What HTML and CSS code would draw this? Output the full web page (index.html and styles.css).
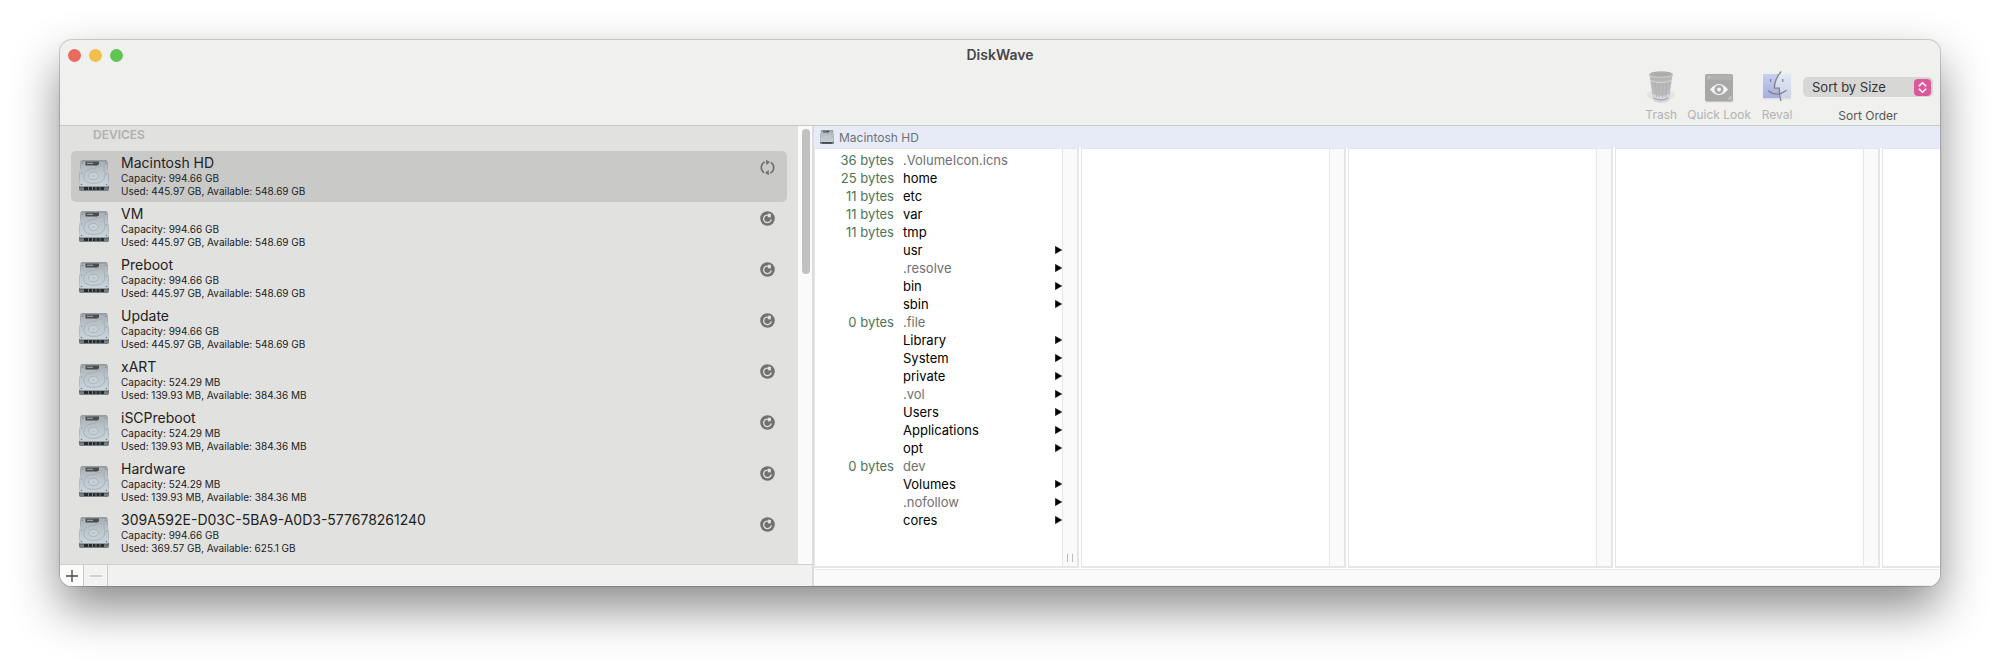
FILE: index.html
```
<!DOCTYPE html>
<html lang="en">
<head>
    <meta charset="UTF-8">
    <meta name="viewport" content="width=device-width, initial-scale=1.0">
    <title>DiskWave</title>
    <link rel="stylesheet" href="styles.css">
</head>
<body>
    <svg class="defs" aria-hidden="true">
        <defs>
            <linearGradient id="hd-top" x1="0" y1="0" x2="0" y2="1">
                <stop offset="0" stop-color="#aab0b4"/>
                <stop offset="0.5" stop-color="#bcc6cc"/>
                <stop offset="1" stop-color="#cbd5dc"/>
            </linearGradient>
            <linearGradient id="trash-fill" x1="0" y1="0" x2="0" y2="1">
                <stop offset="0" stop-color="#b4b4b4"/>
                <stop offset="0.7" stop-color="#bcbcbf"/>
                <stop offset="1" stop-color="#d4d4d8"/>
            </linearGradient>
            <linearGradient id="finder-left" x1="0" y1="0" x2="0" y2="1">
                <stop offset="0" stop-color="#c6cff0"/>
                <stop offset="1" stop-color="#a5aede"/>
            </linearGradient>
            <linearGradient id="finder-right" x1="0" y1="0" x2="0" y2="1">
                <stop offset="0" stop-color="#e3e8f5"/>
                <stop offset="1" stop-color="#ccd2e8"/>
            </linearGradient>
        </defs>
        <symbol id="drive" viewBox="0 0 30 31">
            <path d="M3 .5h24q1.200 0 1.400 1.200L30 25.500v3.500q0 1.800-1.800 1.800H1.800Q0 30.800 0 29v-3.500L1.600 1.700Q1.800.5 3 .5z" fill="#5c6266"/>
            <path d="M3 .5h24q1.200 0 1.400 1.200L30 25q0 1.600-1.600 1.600H1.600Q0 26.600 0 25L1.600 1.700Q1.800.5 3 .5z" fill="url(#hd-top)"/>
            <path d="M2 1.400Q2.400.5 3 .5h24q.8 0 1 .9z" fill="#8b9093"/>
            <path d="M6.500 1.500H20v3q-2 1.600-4 1H6.500z" fill="#4a4d4f"/>
            <path d="M8 3.300h6" stroke="#9a9fa2" stroke-width="1.200"/>
            <path d="M25 2.500v7q0 2 .8 4 1.200 8-8 9.700Q6 24.500 4.700 17.500 4.500 10.500 11.500 9q5.500-.3 7-2.500l3.500 0V2.500" fill="none" stroke="#a0abb2" stroke-width=".8"/>
            <ellipse cx="14.500" cy="16" rx="5" ry="3.600" fill="#c6d0d6" stroke="#a3aeb5" stroke-width=".8"/>
            <path d="M13 16h3" stroke="#a9b3b9" stroke-width=".7"/>
            <g fill="#747d83"><circle cx="3.500" cy="3.300" r=".7"/><circle cx="26.800" cy="3.300" r=".7"/><circle cx="2.600" cy="13" r=".6"/><circle cx="27.700" cy="14" r=".6"/><circle cx="2.500" cy="24.500" r=".8"/><circle cx="27.500" cy="24.500" r=".8"/></g>
            <path d="M0 27.800h30V29q0 1.800-1.800 1.800H1.800Q0 30.800 0 29z" fill="#777d81"/>
            <path d="M5 27h20v3H5z" fill="#282b2d"/>
            <path d="M9.500 27v3M13.500 27v3M17 27v3M21 27v3" stroke="#767c80" stroke-width="1"/>
        </symbol>
        <symbol id="rescan" viewBox="0 0 15 15">
            <circle cx="7.500" cy="7.500" r="7.300" fill="#717170"/>
            <path d="M8 4.100A3.800 3.800 0 1 0 11.200 8.300" fill="none" stroke="#e1e1df" stroke-width="1.300"/>
            <path d="M8.200 2.600 11 2.900 10.800 6.400 7.700 6.200z" fill="#e1e1df"/>
        </symbol>
        <symbol id="arrow" viewBox="0 0 7 8">
            <path d="M.4.4 6.700 4 .4 7.600z" fill="#000" stroke="#000" stroke-width=".6" stroke-linejoin="round"/>
        </symbol>
    </svg>

    <div class="window">
        <header class="header">
            <div class="titlebar">
                <div class="lights">
                    <button class="light close" aria-label="Close"></button>
                    <button class="light minimize" aria-label="Minimize"></button>
                    <button class="light maximize" aria-label="Zoom"></button>
                </div>
                <h1 class="title">DiskWave</h1>
            </div>
            <div class="toolbar">
                <button class="tool" disabled>
                    <svg class="tool-icon" viewBox="0 0 32 34">
                        <ellipse cx="16" cy="25" rx="14" ry="6" fill="#e4e4e3"/>
                        <path d="M4.500 4 8 29.500q.5 3.200 8 3.200t8-3.200L27.500 4z" fill="url(#trash-fill)"/>
                        <path d="M8 24q8 4 16 0l-.7 5.500q-.5 2.700-7.300 2.700t-7.300-2.700z" fill="#d7d7de"/>
                        <path d="M9 28q7 4 14 0" fill="none" stroke="#a4a4a8" stroke-width="1.300"/>
                        <path d="M10 12l1.500 15M13.500 12.500l.7 15M18 12.500l-.5 15M22 12l-1.500 15" stroke="#b0b0b1" stroke-width="1"/>
                        <path d="M5.500 10.500q10.500 4 21 0" fill="none" stroke="#d9d9d9" stroke-width="1"/>
                        <ellipse cx="16" cy="4.800" rx="11.600" ry="2.600" fill="#adadad" stroke="#c9c9c8" stroke-width="1.200"/>
                        <path d="M5 4.500Q6 2 16 2t11 2.500" fill="none" stroke="#989898" stroke-width=".8"/>
                    </svg>
                    <span>Trash</span>
                </button>
                <button class="tool" disabled>
                    <svg class="tool-icon" viewBox="0 0 32 34">
                        <rect x="2" y="30" width="28" height="2.500" rx="1" fill="#dededd"/>
                        <rect x="2" y="4" width="28" height="27.500" rx="2" fill="#a8a8a8"/>
                        <path d="M3 5h26v5H3z" fill="#b0b0b0"/>
                        <circle cx="6" cy="7.500" r="1.200" fill="#c6c6c6"/>
                        <path d="M24 29.500 28.500 25v4.500z" fill="#c4c4c4"/>
                        <path d="M7 19.500q9-11 18 0-9 11-18 0z" fill="#f6f6f6"/>
                        <circle cx="16" cy="19.500" r="4.500" fill="#a8a8a8"/>
                        <circle cx="16" cy="19.500" r="2" fill="#f6f6f6"/>
                    </svg>
                    <span>Quick Look</span>
                </button>
                <button class="tool" disabled>
                    <svg class="tool-icon" viewBox="0 0 32 34">
                        <path d="M2 28h28v1.500H2z" fill="#e0e0e0"/>
                        <path d="M2 4h28v24H2z" fill="url(#finder-right)"/>
                        <path d="M2 4h15.500Q14 11 13.500 19H18l0 9H2z" fill="url(#finder-left)"/>
                        <path d="M20.300 1.500Q13.800 8 13.300 18.200H18.300Q18 25 20 31" fill="none" stroke="#828284" stroke-width="1.300"/>
                        <path d="M7 20.500Q16 28 25.500 20.300" fill="none" stroke="#828284" stroke-width="1.200"/>
                        <path d="M9.500 9v3M21.800 9v3" stroke="#828284" stroke-width="1.200"/>
                    </svg>
                    <span>Reval</span>
                </button>
                <div class="sort">
                    <div class="sort-box">
                        <select class="sort-select" id="sort-order">
                            <option>Sort by Size</option>
                            <option>Sort by Name</option>
                        </select>
                        <svg class="sort-knob" viewBox="0 0 17 17">
                            <rect width="17" height="17" rx="4" fill="#dc589b"/>
                            <path d="M5.300 6.800 8.500 3.700l3.200 3.100M5.300 10.200l3.200 3.100 3.200-3.100" fill="none" stroke="#fff" stroke-width="1.600" stroke-linecap="round" stroke-linejoin="round"/>
                        </svg>
                    </div>
                    <label for="sort-order">Sort Order</label>
                </div>
            </div>
        </header>

        <main class="content">
            <aside class="sidebar">
                <div class="sidebar-body">
                    <div class="devices">
                        <h2 class="devices-title">DEVICES</h2>
                        <ul class="device-list">
                            <li class="device selected">
                                <svg class="drive"><use href="#drive"/></svg>
                                <div class="info">
                                    <div class="name">Macintosh HD</div>
                                    <div class="detail">Capacity: 994.66 GB</div>
                                    <div class="detail">Used: 445.97 GB, Available: 548.69 GB</div>
                                </div>
                                <button class="rescan" aria-label="Scanning Macintosh HD">
                                    <svg viewBox="0 0 15 15">
                                        <path d="M4.800 1.900A6.200 6.200 0 0 0 4 12.600M10.200 13.100A6.200 6.200 0 0 0 11 2.400" fill="none" stroke="#6e6e6d" stroke-width="1.600"/>
                                        <path d="M6-.2 10 2 6.400 5zM9 15.200 5 13 8.600 10z" fill="#6e6e6d"/>
                                    </svg>
                                </button>
                            </li>
                            <li class="device">
                                <svg class="drive"><use href="#drive"/></svg>
                                <div class="info">
                                    <div class="name">VM</div>
                                    <div class="detail">Capacity: 994.66 GB</div>
                                    <div class="detail">Used: 445.97 GB, Available: 548.69 GB</div>
                                </div>
                                <button class="rescan" aria-label="Rescan VM"><svg><use href="#rescan"/></svg></button>
                            </li>
                            <li class="device">
                                <svg class="drive"><use href="#drive"/></svg>
                                <div class="info">
                                    <div class="name">Preboot</div>
                                    <div class="detail">Capacity: 994.66 GB</div>
                                    <div class="detail">Used: 445.97 GB, Available: 548.69 GB</div>
                                </div>
                                <button class="rescan" aria-label="Rescan Preboot"><svg><use href="#rescan"/></svg></button>
                            </li>
                            <li class="device">
                                <svg class="drive"><use href="#drive"/></svg>
                                <div class="info">
                                    <div class="name">Update</div>
                                    <div class="detail">Capacity: 994.66 GB</div>
                                    <div class="detail">Used: 445.97 GB, Available: 548.69 GB</div>
                                </div>
                                <button class="rescan" aria-label="Rescan Update"><svg><use href="#rescan"/></svg></button>
                            </li>
                            <li class="device">
                                <svg class="drive"><use href="#drive"/></svg>
                                <div class="info">
                                    <div class="name">xART</div>
                                    <div class="detail">Capacity: 524.29 MB</div>
                                    <div class="detail">Used: 139.93 MB, Available: 384.36 MB</div>
                                </div>
                                <button class="rescan" aria-label="Rescan xART"><svg><use href="#rescan"/></svg></button>
                            </li>
                            <li class="device">
                                <svg class="drive"><use href="#drive"/></svg>
                                <div class="info">
                                    <div class="name">iSCPreboot</div>
                                    <div class="detail">Capacity: 524.29 MB</div>
                                    <div class="detail">Used: 139.93 MB, Available: 384.36 MB</div>
                                </div>
                                <button class="rescan" aria-label="Rescan iSCPreboot"><svg><use href="#rescan"/></svg></button>
                            </li>
                            <li class="device">
                                <svg class="drive"><use href="#drive"/></svg>
                                <div class="info">
                                    <div class="name">Hardware</div>
                                    <div class="detail">Capacity: 524.29 MB</div>
                                    <div class="detail">Used: 139.93 MB, Available: 384.36 MB</div>
                                </div>
                                <button class="rescan" aria-label="Rescan Hardware"><svg><use href="#rescan"/></svg></button>
                            </li>
                            <li class="device">
                                <svg class="drive"><use href="#drive"/></svg>
                                <div class="info">
                                    <div class="name">309A592E-D03C-5BA9-A0D3-577678261240</div>
                                    <div class="detail">Capacity: 994.66 GB</div>
                                    <div class="detail">Used: 369.57 GB, Available: 625.1 GB</div>
                                </div>
                                <button class="rescan" aria-label="Rescan 309A592E-D03C-5BA9-A0D3-577678261240"><svg><use href="#rescan"/></svg></button>
                            </li>
                        </ul>
                    </div>
                    <div class="scrollbar"><div class="thumb"></div></div>
                </div>
                <div class="sidebar-footer">
                    <button class="footer-button" aria-label="Add device">
                        <svg viewBox="0 0 12 12"><path d="M6 0v12M0 6h12" stroke="#4a4a4a" stroke-width="1.400"/></svg>
                    </button>
                    <button class="footer-button" aria-label="Remove device" disabled>
                        <svg viewBox="0 0 12 12"><path d="M0 6h12" stroke="#c4c4c4" stroke-width="1.400"/></svg>
                    </button>
                </div>
            </aside>

            <section class="browser">
                <div class="path">
                    <svg class="path-icon"><use href="#drive"/></svg>
                    <span>Macintosh HD</span>
                </div>
                <div class="columns">
                    <div class="column">
                        <ul class="files">
                            <li class="file hidden-file"><span class="size">36 bytes</span><span class="filename">.VolumeIcon.icns</span></li>
                            <li class="file"><span class="size">25 bytes</span><span class="filename">home</span></li>
                            <li class="file"><span class="size">11 bytes</span><span class="filename">etc</span></li>
                            <li class="file"><span class="size">11 bytes</span><span class="filename">var</span></li>
                            <li class="file"><span class="size">11 bytes</span><span class="filename">tmp</span></li>
                            <li class="file"><span class="size"></span><span class="filename">usr</span><svg class="arrow"><use href="#arrow"/></svg></li>
                            <li class="file hidden-file"><span class="size"></span><span class="filename">.resolve</span><svg class="arrow"><use href="#arrow"/></svg></li>
                            <li class="file"><span class="size"></span><span class="filename">bin</span><svg class="arrow"><use href="#arrow"/></svg></li>
                            <li class="file"><span class="size"></span><span class="filename">sbin</span><svg class="arrow"><use href="#arrow"/></svg></li>
                            <li class="file hidden-file"><span class="size">0 bytes</span><span class="filename">.file</span></li>
                            <li class="file"><span class="size"></span><span class="filename">Library</span><svg class="arrow"><use href="#arrow"/></svg></li>
                            <li class="file"><span class="size"></span><span class="filename">System</span><svg class="arrow"><use href="#arrow"/></svg></li>
                            <li class="file"><span class="size"></span><span class="filename">private</span><svg class="arrow"><use href="#arrow"/></svg></li>
                            <li class="file hidden-file"><span class="size"></span><span class="filename">.vol</span><svg class="arrow"><use href="#arrow"/></svg></li>
                            <li class="file"><span class="size"></span><span class="filename">Users</span><svg class="arrow"><use href="#arrow"/></svg></li>
                            <li class="file"><span class="size"></span><span class="filename">Applications</span><svg class="arrow"><use href="#arrow"/></svg></li>
                            <li class="file"><span class="size"></span><span class="filename">opt</span><svg class="arrow"><use href="#arrow"/></svg></li>
                            <li class="file hidden-file"><span class="size">0 bytes</span><span class="filename">dev</span></li>
                            <li class="file"><span class="size"></span><span class="filename">Volumes</span><svg class="arrow"><use href="#arrow"/></svg></li>
                            <li class="file hidden-file"><span class="size"></span><span class="filename">.nofollow</span><svg class="arrow"><use href="#arrow"/></svg></li>
                            <li class="file"><span class="size"></span><span class="filename">cores</span><svg class="arrow"><use href="#arrow"/></svg></li>
                        </ul>
                        <div class="track"><div class="grip"></div></div>
                    </div>
                    <div class="column"><div class="files"></div><div class="track"></div></div>
                    <div class="column"><div class="files"></div><div class="track"></div></div>
                    <div class="column"><div class="files"></div><div class="track"></div></div>
                    <div class="column"><div class="files"></div><div class="track"></div></div>
                </div>
                <div class="bottom-track"></div>
            </section>
        </main>
    </div>
</body>
</html>
```
FILE: styles.css
```
* {
    box-sizing: border-box;
}
body {
    font-family: Inter, "Liberation Sans", sans-serif;
    background-color: white;
    color: #222;
    display: flex;
    min-height: 100vh;
    margin: 0;
    padding: 40px 60px 78px;
}
button {
    background: none;
    border: none;
    padding: 0;
    font-family: inherit;
}
ul {
    list-style: none;
    margin: 0;
    padding: 0;
}
svg {
    display: block;
}
.defs {
    position: absolute;
    width: 0;
    height: 0;
}
.window {
    flex: 1;
    min-width: 0;
    display: flex;
    flex-direction: column;
    overflow: hidden;
    border-radius: 12px;
    background-color: #f0f0ee;
    box-shadow: 0 0 1px 1px rgba(0, 0, 0, 0.18), 0 22px 48px rgba(0, 0, 0, 0.46);
}

/* title bar and toolbar */
.header {
    border-bottom: 1px solid #c9c9c8;
}
.titlebar {
    display: grid;
    grid-template-columns: 1fr auto 1fr;
    align-items: center;
    height: 30px;
    padding: 0 8px;
}
.lights {
    display: flex;
    gap: 8px;
}
.light {
    width: 13px;
    height: 13px;
    border-radius: 50%;
}
.close {
    background-color: #ea6a5e;
}
.minimize {
    background-color: #f2bf4c;
}
.maximize {
    background-color: #61c554;
}
.title {
    margin: 0;
    font-size: 14px;
    line-height: 20px;
    font-weight: 600;
    color: #474747;
}
.toolbar {
    display: flex;
    justify-content: flex-end;
    height: 55px;
    padding-right: 7px;
    gap: 10px;
}
.tool {
    display: flex;
    flex-direction: column;
    align-items: center;
    gap: 1px;
    font-size: 12px;
    line-height: 20px;
    color: #b3b3b2;
}
.tool-icon {
    width: 32px;
    height: 34px;
}
.sort {
    display: flex;
    flex-direction: column;
    align-items: center;
    gap: 8px;
    padding-top: 7px;
    font-size: 12px;
    line-height: 20px;
    color: #565655;
}
.sort-box {
    position: relative;
}
.sort-select {
    appearance: none;
    width: 130px;
    height: 20px;
    padding: 0 24px 0 9px;
    border: none;
    border-radius: 5px;
    background-color: #d7d7d5;
    font-family: inherit;
    font-size: 13px;
    color: #333;
}
.sort-knob {
    position: absolute;
    top: 2px;
    right: 2px;
    width: 17px;
    height: 17px;
    pointer-events: none;
}

/* device list */
.content {
    flex: 1;
    display: flex;
    min-height: 0;
}
.sidebar {
    width: calc(40% + 2px);
    display: flex;
    flex-direction: column;
    border-right: 2px solid #dcdcdb;
}
.sidebar-body {
    flex: 1;
    display: flex;
}
.devices {
    flex: 1;
    padding: 0 11px;
    background-color: #e1e1df;
}
.devices-title {
    margin: 0;
    padding: 0 22px 7px;
    font-size: 12px;
    line-height: 18px;
    font-weight: 600;
    color: #b0b0af;
}
.device {
    display: flex;
    gap: 12px;
    height: 51px;
    padding: 3px 12px 0 8px;
    border-radius: 5px;
}
.selected {
    background-color: #c9c9c7;
}
.drive {
    width: 30px;
    height: 31px;
    margin-top: 6px;
}
.info {
    flex: 1;
}
.name {
    font-size: 14px;
    line-height: 18px;
}
.detail {
    font-size: 10px;
    line-height: 13px;
}
.rescan {
    width: 15px;
    height: 15px;
    margin-top: 6px;
}
.rescan svg {
    width: 15px;
    height: 15px;
}
.scrollbar {
    width: 14px;
    padding: 3px 2px 0 4px;
    background-color: #fafafa;
}
.thumb {
    width: 8px;
    height: 145px;
    border-radius: 4px;
    background-color: #c1c1c1;
}
.sidebar-footer {
    display: flex;
    height: 22px;
    border-top: 1px solid #d0d0cf;
    background-color: #f1f1f1;
}
.footer-button {
    display: flex;
    justify-content: center;
    align-items: center;
    width: 24px;
    border-right: 1px solid #c8c8c8;
    background-color: #fbfbfb;
}
.footer-button:disabled {
    background-color: #f3f3f3;
}
.footer-button svg {
    width: 12px;
    height: 12px;
}

/* file browser */
.browser {
    flex: 1;
    min-width: 0;
    display: flex;
    flex-direction: column;
    background-color: white;
}
.path {
    display: flex;
    align-items: center;
    gap: 5px;
    height: 22px;
    padding-left: 6px;
    background-color: #e7ebf7;
    font-size: 12px;
    color: #6d7076;
}
.path-icon {
    width: 14px;
    height: 14px;
}
.columns {
    flex: 1;
    display: flex;
    gap: 2px;
    overflow: hidden;
}
.column {
    flex: none;
    display: flex;
    width: 265px;
    border: 1px solid #e6e6e6;
    border-width: 1px 2px 2px 1px;
}
.files {
    flex: 1;
    padding-top: 2px;
}
.file {
    display: flex;
    align-items: center;
    font-size: 13px;
    line-height: 18px;
    color: black;
}
.size {
    width: 79px;
    margin-right: 9px;
    text-align: right;
    color: #4d7458;
}
.filename {
    flex: 1;
}
.hidden-file .filename {
    color: #707070;
}
.arrow {
    width: 7px;
    height: 8px;
}
.track {
    display: flex;
    flex-direction: column;
    justify-content: flex-end;
    align-items: center;
    width: 15px;
    padding-bottom: 4px;
    border-left: 1px solid #e6e6e6;
    background-color: #fafafa;
}
.grip {
    width: 6px;
    height: 8px;
    border: 1px solid #b9b9b9;
    border-width: 0 1px;
}
.bottom-track {
    height: 17px;
    border: 1px solid #ececec;
    border-width: 1px 0;
    margin-top: 1px;
    background-color: #fafafa;
}
```
